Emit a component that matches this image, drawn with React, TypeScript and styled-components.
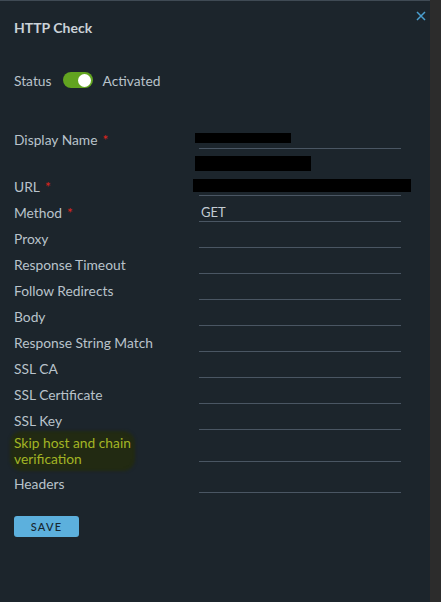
import React from "react";
import styled, { createGlobalStyle } from "styled-components";

const Global = createGlobalStyle`
  html, body { margin: 0; padding: 0; background: #2c2c2c; }
  body { font-family: Lato, "Noto Sans", "Liberation Sans", sans-serif; }
`;

const Page = styled.div`
  display: flex;
  width: 441px;
  height: 602px;
  overflow: hidden;
`;

const Panel = styled.div`
  width: 430px;
  height: 602px;
  box-sizing: border-box;
  background: #1c252c;
  border-top: 1px solid #3f4a54;
  padding-left: 14px;
  flex-shrink: 0;
`;

const Header = styled.div`
  display: flex;
  justify-content: space-between;
  align-items: flex-start;
  height: 36px;
`;

const Title = styled.h1`
  margin: 18px 0 0;
  font-size: 14px;
  line-height: 18px;
  font-weight: 700;
  color: #cbd2d8;
`;

const Close = styled.button`
  margin: 9px 3px 0 0;
  padding: 0;
  width: 12px;
  height: 12px;
  border: 0;
  background: transparent;
  display: flex;
  align-items: center;
  justify-content: center;
`;

const StatusRow = styled.div`
  margin-top: 34px;
  display: flex;
  align-items: center;
  height: 18px;
  font-size: 13.8px;
  color: #b9c3cb;
`;

const Toggle = styled.div<{ $on: boolean }>`
  margin: 0 10px 0 11px;
  width: 30px;
  height: 16px;
  border-radius: 8px;
  background: ${(p) => (p.$on ? "#62a420" : "#555")};
  display: flex;
  align-items: center;
  justify-content: ${(p) => (p.$on ? "flex-end" : "flex-start")};
  padding: 0 2px;
  box-sizing: border-box;
`;

const Knob = styled.div`
  width: 13px;
  height: 13px;
  border-radius: 50%;
  background: #fff;
`;

const Form = styled.div`
  margin-top: 34px;
`;

const Row = styled.div<{ $h?: number }>`
  display: grid;
  grid-template-columns: 185px 202px;
  align-items: end;
  height: ${(p) => p.$h ?? 26}px;
`;

const Label = styled.div<{ $lh?: number }>`
  font-size: 13.8px;
  line-height: ${(p) => p.$lh ?? 18}px;
  color: #b9c3cb;
  white-space: nowrap;
`;

const Req = styled.span`
  color: #e0241c;
  margin-left: 5px;
`;

const Highlight = styled.span`
  display: inline-block;
  color: #a3b524;
  background: #222a12;
  box-shadow: 0 0 3px 4px #222a12;
  border-radius: 8px;
`;

const Field = styled.div<{ $mb?: number }>`
  height: 18px;
  box-sizing: border-box;
  border-bottom: 1px solid #4a5663;
  margin-bottom: ${(p) => p.$mb ?? 0}px;
  display: flex;
  align-items: flex-start;
  font-size: 13px;
  line-height: 17px;
  color: #c3ccd3;
  padding-left: 2px;
`;

const Redacted = styled.div<{ $w: number; $h: number; $dx: number; $dy: number }>`
  background: #000;
  width: ${(p) => p.$w}px;
  height: ${(p) => p.$h}px;
  margin-left: ${(p) => p.$dx}px;
  margin-top: ${(p) => p.$dy}px;
  flex-shrink: 0;
`;

const HintRow = styled.div`
  height: 21px;
  box-sizing: border-box;
  padding: 7px 0 0 181px;
`;

const SaveButton = styled.button`
  margin-top: 23px;
  width: 65px;
  height: 21px;
  border: 0;
  border-radius: 3px;
  background: #5cb0dd;
  color: #17262f;
  font-family: Lato, "Noto Sans", sans-serif;
  font-size: 11px;
  font-weight: 500;
  letter-spacing: 1.2px;
  padding: 0;
`;

const fields = [
  "Proxy",
  "Response Timeout",
  "Follow Redirects",
  "Body",
  "Response String Match",
  "SSL CA",
  "SSL Certificate",
  "SSL Key",
];

export default function App() {
  return (
    <Page>
      <Global />
      <Panel>
        <Header>
          <Title>HTTP Check</Title>
          <Close aria-label="Close">
            <svg width="10" height="10" viewBox="0 0 10 10">
              <path d="M1 1L9 9M9 1L1 9" stroke="#4a9fd0" strokeWidth="1.5" />
            </svg>
          </Close>
        </Header>
        <StatusRow>
          Status
          <Toggle $on>
            <Knob />
          </Toggle>
          Activated
        </StatusRow>
        <Form>
          <Row>
            <Label>
              Display Name<Req>*</Req>
            </Label>
            <Field>
              <Redacted $w={96} $h={10} $dx={-6} $dy={2} />
            </Field>
          </Row>
          <HintRow>
            <Redacted $w={116} $h={15} $dx={0} $dy={0} />
          </HintRow>
          <Row>
            <Label>
              URL<Req>*</Req>
            </Label>
            <Field>
              <Redacted $w={218} $h={13} $dx={-8} $dy={1} />
            </Field>
          </Row>
          <Row>
            <Label>
              Method<Req>*</Req>
            </Label>
            <Field>GET</Field>
          </Row>
          {fields.map((f) => (
            <Row key={f}>
              <Label>{f}</Label>
              <Field />
            </Row>
          ))}
          <Row $h={37}>
            <Label $lh={16}>
              <Highlight>
                Skip host and chain
                <br />
                verification
              </Highlight>
            </Label>
            <Field $mb={5} />
          </Row>
          <Row>
            <Label>Headers</Label>
            <Field />
          </Row>
        </Form>
        <SaveButton>SAVE</SaveButton>
      </Panel>
    </Page>
  );
}
